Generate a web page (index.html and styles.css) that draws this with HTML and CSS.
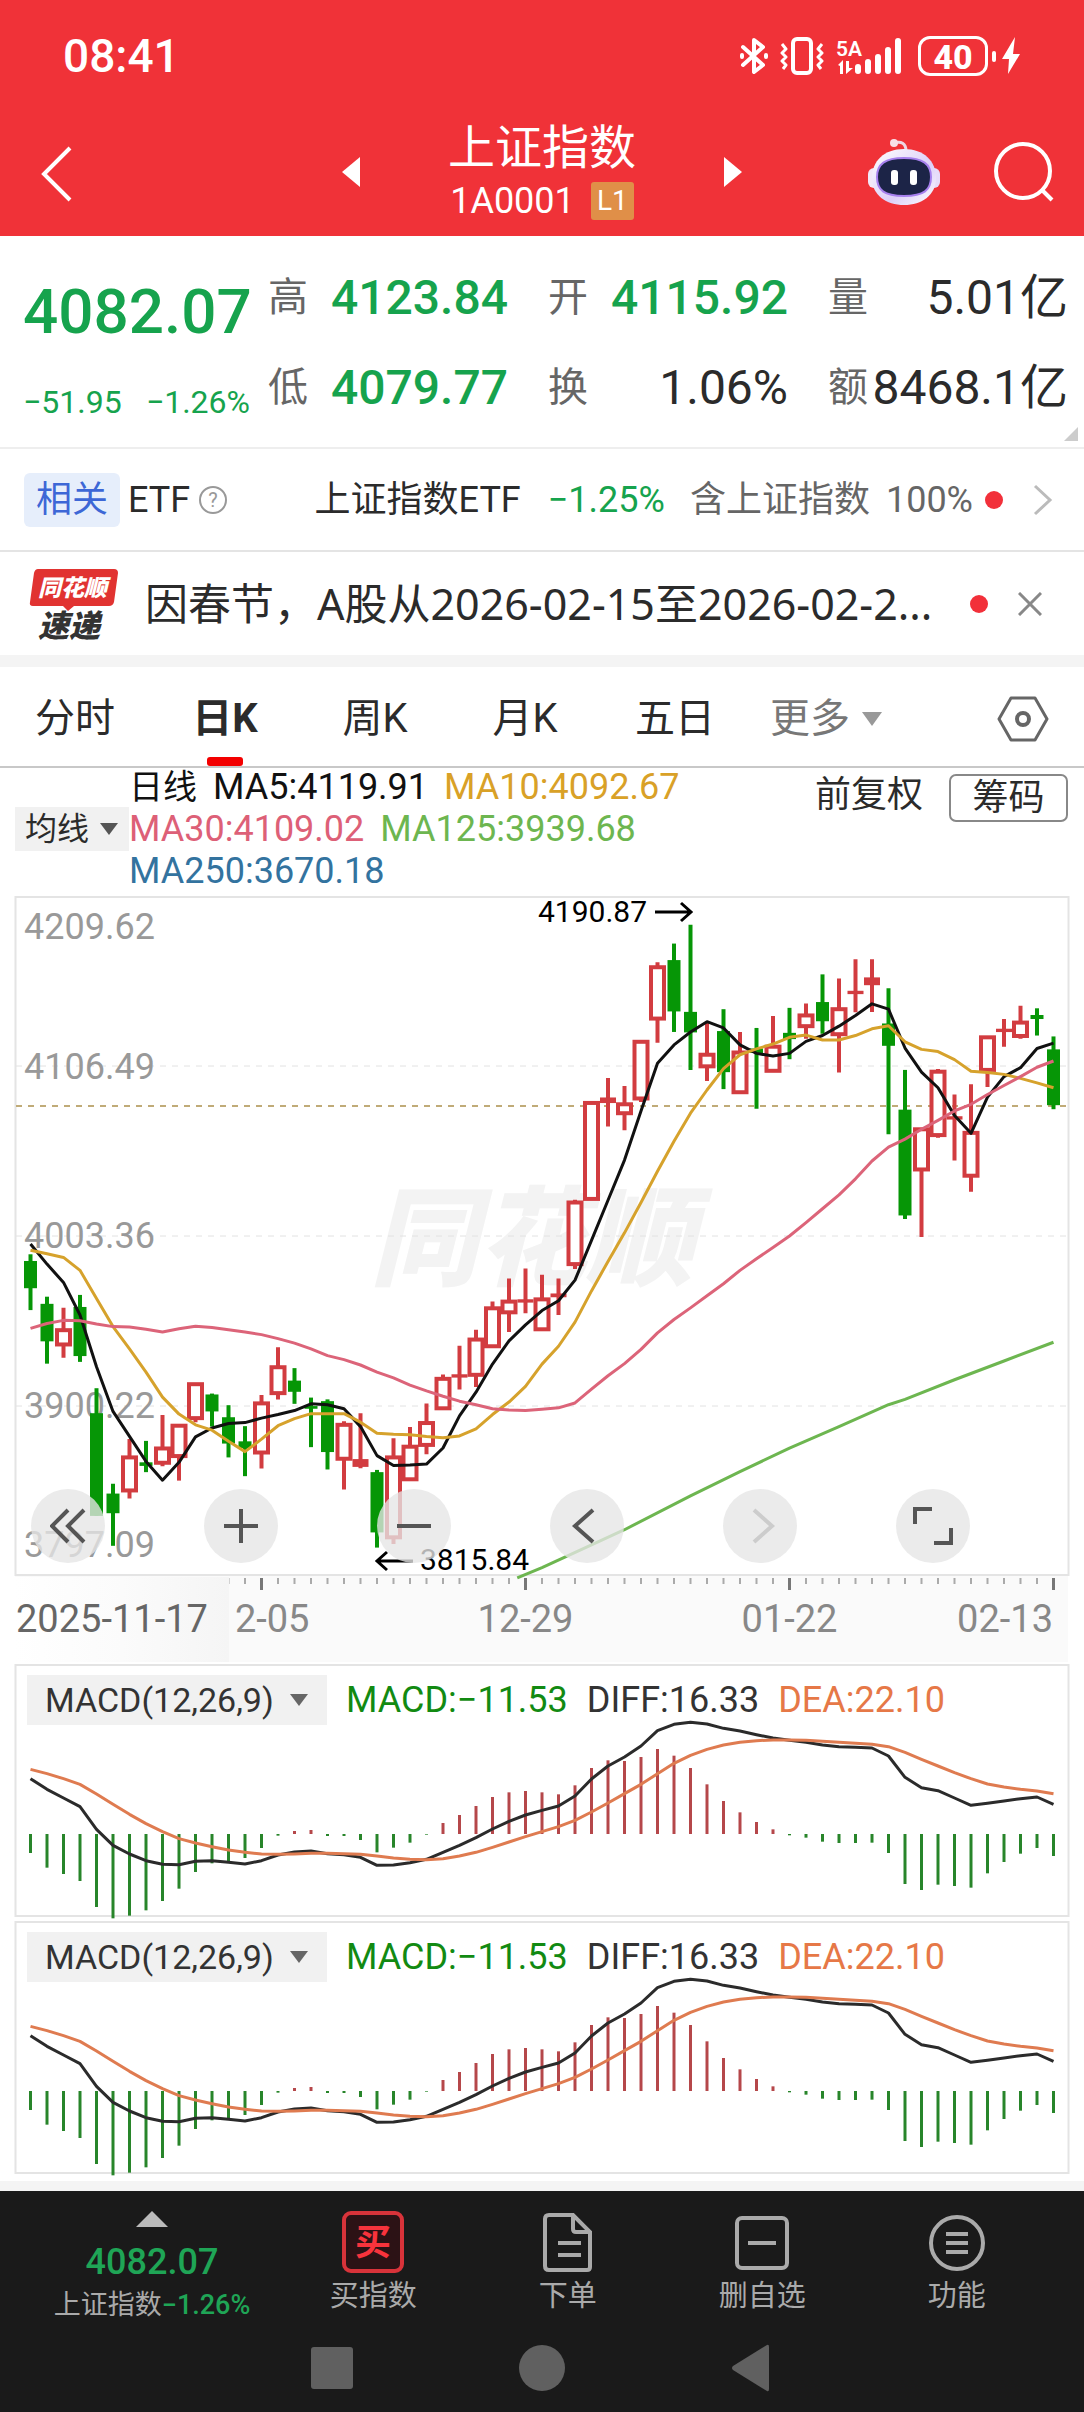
FILE: index.html
```html
<!DOCTYPE html>
<html lang="zh-CN">
<head>
<meta charset="utf-8">
<meta name="viewport" content="width=device-width, initial-scale=1">
<title>上证指数 1A0001</title>
<link rel="stylesheet" href="styles.css">
</head>
<body>
<header class="top">
  <div class="status">
    <span class="clock">08:41</span>
    <div class="status-icons">
      <svg width="28" height="38" viewBox="0 0 28 38" fill="none" stroke="#fff" stroke-width="4" stroke-linejoin="round" stroke-linecap="round"><path d="M3 10l20 18-9 7V3l9 7L3 28"/><path d="M2 18v2M26 18v2" stroke-width="4"/></svg>
      <svg width="44" height="38" viewBox="0 0 44 38" fill="none" stroke="#fff" stroke-width="4" stroke-linejoin="round"><rect x="13" y="2" width="18" height="34" rx="4"/><path d="M2 7l4 5-4 4 4 4-4 4 4 4-3 4M42 7l-4 5 4 4-4 4 4 4-4 4 3 4" stroke-width="3"/></svg>
      <svg class="signal" width="66" height="38" viewBox="0 0 66 38" fill="#fff"><text x="0" y="19" font-size="21">5A</text><path d="M2 28l5-5v14H4v-8zM10 24h3v7h4l-7 6z"/><rect x="19" y="27" width="6" height="10" rx="3"/><rect x="29" y="22" width="6" height="15" rx="3"/><rect x="39" y="17" width="6" height="20" rx="3"/><rect x="49" y="10" width="6" height="27" rx="3"/><rect x="59" y="1" width="6" height="36" rx="3"/></svg>
      <span class="battery">40</span>
      <svg width="28" height="38" viewBox="0 0 28 38" fill="#fff"><rect x="0" y="14" width="4" height="11" rx="2"/><path d="M23 0L10 22h7l-1 15 12-20h-7z"/></svg>
    </div>
  </div>
  <div class="title-row">
    <button class="plain back" aria-label="返回"><svg width="32" height="56" viewBox="0 0 32 56" fill="none" stroke="#fff" stroke-width="4"><path d="M29 2L3 28l26 26"/></svg></button>
    <div class="switcher">
      <button class="plain" aria-label="上一个"><svg width="18" height="30" viewBox="0 0 18 30" fill="#fff"><path d="M18 0v30L0 15z"/></svg></button>
      <div class="title-block">
        <h1 class="title">上证指数</h1>
        <div class="code">1A0001<span class="level">L1</span></div>
      </div>
      <button class="plain" aria-label="下一个"><svg width="18" height="30" viewBox="0 0 18 30" fill="#fff"><path d="M0 0v30l18-15z"/></svg></button>
    </div>
    <div class="title-tools">
      <button class="plain robot" aria-label="智能助手"><svg width="72" height="68" viewBox="0 0 72 68"><defs><linearGradient id="shell" x1="0" y1="0" x2="1" y2="1"><stop offset="0" stop-color="#fff"/><stop offset=".6" stop-color="#dccff8"/><stop offset="1" stop-color="#fff"/></linearGradient></defs><path d="M26 5c7-2 12 0 12 8" fill="none" stroke="#eed6e4" stroke-width="3"/><circle cx="26" cy="5" r="4" fill="#f8dfe8"/><rect x="0" y="30" width="12" height="20" rx="6" fill="#f2e8f8"/><rect x="60" y="30" width="12" height="20" rx="6" fill="#e6dcfa"/><path d="M36 11c20 0 32 12 32 29S54 67 36 67 4 57 4 40s12-29 32-29z" fill="url(#shell)"/><path d="M36 20c19 0 27 6 27 19s-7 19-27 19S9 52 9 39s8-19 27-19z" fill="#1c2447" stroke="#a680ee" stroke-width="2"/><rect x="23" y="32" width="7" height="15" rx="3" fill="#fff"/><rect x="42" y="32" width="7" height="15" rx="3" fill="#fff"/></svg></button>
      <button class="plain" aria-label="搜索"><svg width="60" height="60" viewBox="0 0 60 60" fill="none" stroke="#fff" stroke-width="4"><circle cx="29" cy="29" r="27"/><path d="M48 48l10 10"/></svg></button>
    </div>
  </div>
</header>

<section class="quote">
  <div class="quote-main">
    <div class="price">4082.07</div>
    <div class="change"><span>−51.95</span><span>−1.26%</span></div>
  </div>
  <dl class="stats">
    <div><dt>高</dt><dd class="down">4123.84</dd></div>
    <div><dt>开</dt><dd class="down">4115.92</dd></div>
    <div><dt>量</dt><dd>5.01亿</dd></div>
    <div><dt>低</dt><dd class="down">4079.77</dd></div>
    <div><dt>换</dt><dd>1.06%</dd></div>
    <div><dt>额</dt><dd>8468.1亿</dd></div>
  </dl>
  <svg class="corner" width="14" height="14" viewBox="0 0 14 14" fill="#ccc"><path d="M14 0v14H0z"/></svg>
</section>

<a class="etf" href="#etf">
  <span class="tag">相关</span>
  <span class="etf-label">ETF</span>
  <svg width="28" height="28" viewBox="0 0 28 28"><circle cx="14" cy="14" r="13" fill="none" stroke="#999" stroke-width="2"/><text x="14" y="21" font-size="20" text-anchor="middle" fill="#999">?</text></svg>
  <span class="etf-name">上证指数ETF</span>
  <span class="etf-change">−1.25%</span>
  <span class="etf-weight"><span>含上证指数</span> <span>100%</span></span>
  <span class="dot"></span>
  <svg class="etf-more" width="20" height="32" viewBox="0 0 20 32" fill="none" stroke="#bbb" stroke-width="3"><path d="M2 2l15 14L2 30"/></svg>
</a>

<section class="news">
  <svg class="news-logo" width="90" height="74" viewBox="0 0 90 74"><path d="M9 2h76q4 0 4 4l-4 29q-1 4-5 4H45l-6 5-5-5H4q-4 0-3-4L5 6q1-4 4-4z" fill="#e13331"/><text x="9" y="29" font-size="23" fill="#fff">同花顺</text><text x="9" y="70" font-size="31" fill="#333">速递</text></svg>
  <a class="news-text" href="#news">因春节，A股从2026-02-15至2026-02-2...</a>
  <span class="dot"></span>
  <button class="plain" aria-label="关闭"><svg width="24" height="24" viewBox="0 0 24 24" stroke="#888" stroke-width="3"><path d="M1 1l22 22M23 1L1 23"/></svg></button>
</section>

<nav class="tabs">
  <button class="plain tab">分时</button>
  <button class="plain tab active">日K</button>
  <button class="plain tab">周K</button>
  <button class="plain tab">月K</button>
  <button class="plain tab">五日</button>
  <label class="more"><select aria-label="更多周期"><option>更多</option></select><svg width="20" height="14" viewBox="0 0 20 14" fill="#999"><path d="M0 0h20L10 14z"/></svg></label>
  <button class="plain settings" aria-label="图表设置"><svg width="52" height="46" viewBox="0 0 52 46" fill="none" stroke="#666" stroke-width="3"><path d="M14 2h24l12 21-12 21H14L2 23z" stroke-linejoin="round"/><circle cx="26" cy="23" r="6" stroke-width="4"/></svg></button>
</nav>

<section class="legend">
  <label class="ma-pick"><select aria-label="均线"><option>均线</option></select><svg width="18" height="12" viewBox="0 0 18 12" fill="#555"><path d="M0 0h18L9 12z"/></svg></label>
  <div class="ma-list">
    <span class="ma-title">日线</span>
    <span>MA5:4119.91</span>
    <span class="ma10">MA10:4092.67</span>
    <span class="ma30">MA30:4109.02</span>
    <span class="ma125">MA125:3939.68</span>
    <span class="ma250">MA250:3670.18</span>
  </div>
  <div class="legend-tools">
    <button class="plain adjust">前复权</button>
    <button class="chips">筹码</button>
  </div>
</section>

<section class="chart">
  <svg id="kline" class="plot" viewBox="0 0 1084 772" role="img" aria-label="日K线图"></svg>
  <div class="chart-tools">
    <button class="round" aria-label="最早"><svg width="36" height="36" viewBox="0 0 36 36"><path d="M18 2L2 18l16 16M34 2L18 18l16 16"/></svg></button>
    <button class="round" aria-label="放大"><svg width="36" height="36" viewBox="0 0 36 36"><path d="M18 1v34M1 18h34"/></svg></button>
    <button class="round" aria-label="缩小"><svg width="36" height="36" viewBox="0 0 36 36"><path d="M1 18h34"/></svg></button>
    <button class="round" aria-label="向左"><svg width="36" height="36" viewBox="0 0 36 36"><path d="M24 2L6 18l18 16"/></svg></button>
    <button class="round faint" aria-label="向右"><svg width="36" height="36" viewBox="0 0 36 36"><path d="M12 2l18 16-18 16"/></svg></button>
    <button class="round" aria-label="全屏"><svg width="40" height="40" viewBox="0 0 40 40"><path d="M2 18V3h17M38 22v15H21"/></svg></button>
  </div>
</section>

<section class="macd">
  <div class="macd-head">
    <label class="macd-pick"><select aria-label="指标"><option>MACD(12,26,9)</option></select><svg width="18" height="12" viewBox="0 0 18 12" fill="#666"><path d="M0 0h18L9 12z"/></svg></label>
    <span class="macd-value">MACD:−11.53</span><span>DIFF:16.33</span><span class="dea">DEA:22.10</span>
  </div>
  <svg class="plot macd-plot" viewBox="0 0 1084 184" role="img" aria-label="MACD"></svg>
</section>
<section class="macd">
  <div class="macd-head">
    <label class="macd-pick"><select aria-label="指标"><option>MACD(12,26,9)</option></select><svg width="18" height="12" viewBox="0 0 18 12" fill="#666"><path d="M0 0h18L9 12z"/></svg></label>
    <span class="macd-value">MACD:−11.53</span><span>DIFF:16.33</span><span class="dea">DEA:22.10</span>
  </div>
  <svg class="plot macd-plot" viewBox="0 0 1084 184" role="img" aria-label="MACD"></svg>
</section>

<footer class="bottom">
  <nav class="actions">
    <a class="ticker" href="#index">
      <svg width="32" height="16" viewBox="0 0 32 16" fill="#bbb"><path d="M16 0l16 16H0z"/></svg>
      <span class="ticker-price">4082.07</span>
      <span class="ticker-name">上证指数<b>−1.26%</b></span>
    </a>
    <a class="action" href="#buy"><svg width="62" height="62" viewBox="0 0 62 62"><rect x="2" y="2" width="58" height="58" rx="7" fill="#2c1215" stroke="#d8333a" stroke-width="4"/><text x="31" y="44" font-size="36" font-weight="700" text-anchor="middle" fill="#f8333c">买</text></svg>买指数</a>
    <a class="action" href="#order"><svg width="62" height="62" viewBox="0 0 62 62" fill="none" stroke="#aaa" stroke-width="4"><path d="M12 4h24l17 17v35q0 3-3 3H12q-4 0-4-4V8q0-4 4-4zM36 4v14q0 3 3 3h14M21 32h23M21 44h23"/></svg>下单</a>
    <a class="action" href="#remove"><svg width="62" height="62" viewBox="0 0 62 62" fill="none" stroke="#aaa" stroke-width="4"><rect x="6" y="7" width="50" height="50" rx="5"/><path d="M17 32h28"/></svg>删自选</a>
    <a class="action" href="#tools"><svg width="62" height="62" viewBox="0 0 62 62" fill="none" stroke="#aaa" stroke-width="4"><circle cx="31" cy="32" r="26"/><path d="M20 23h22M20 32h22M20 41h22"/></svg>功能</a>
  </nav>
  <div class="system">
    <button class="plain" aria-label="最近任务"><svg width="48" height="48" viewBox="0 0 48 48" fill="#606060"><rect x="3" y="3" width="42" height="42" rx="3"/></svg></button>
    <button class="plain" aria-label="主页"><svg width="48" height="48" viewBox="0 0 48 48" fill="#606060"><circle cx="24" cy="24" r="23"/></svg></button>
    <button class="plain" aria-label="返回上级"><svg width="48" height="48" viewBox="0 0 48 48" fill="#606060"><path d="M39 1q2-1 2 2v42q0 3-2 2L5 26q-2-2 0-4z"/></svg></button>
  </div>
</footer>
<script src="chart.js"></script>
</body>
</html>
```
FILE: styles.css
```css
* { box-sizing: border-box; }
body {
  margin: 0;
  background: #fff;
  color: #2b2b2b;
  font-family: Roboto, "Noto Sans CJK SC", sans-serif;
  font-size: 36px;
  line-height: 42px;
}
a { color: inherit; text-decoration: none; }
svg { display: block; flex: none; }
svg text { font-family: Roboto, "Noto Sans CJK SC", sans-serif; }
.plain {
  border: 0;
  padding: 0;
  background: none;
  color: inherit;
  font: inherit;
}
select {
  appearance: none;
  border: 0;
  margin: 0;
  padding: 0;
  background: none;
  color: inherit;
  font: inherit;
}

/* header */
.top { background: #f03238; color: #fff; }
.status {
  display: flex;
  justify-content: space-between;
  align-items: center;
  height: 108px;
  padding: 4px 64px 0 63px;
}
.clock { font-size: 46px; font-weight: 500; }
.status-icons { display: flex; align-items: center; gap: 12px; }
.signal { overflow: visible; }
.signal text { font-weight: 600; }
.battery {
  width: 70px;
  height: 40px;
  margin-left: 4px;
  margin-right: -8px;
  border: 3px solid #fff;
  border-radius: 12px;
  font-size: 34px;
  font-weight: 800;
  line-height: 36px;
  text-align: center;
}
.title-row {
  display: grid;
  grid-template-columns: 1fr auto 1fr;
  align-items: center;
  height: 128px;
  padding: 0 30px;
}
.back { justify-self: start; margin-left: 11px; padding-top: 4px; }
.switcher { display: flex; align-items: center; gap: 88px; }
.title-block { display: grid; justify-items: center; gap: 2px; }
.title { margin: 0; font-size: 47px; line-height: 56px; font-weight: 400; }
.code { display: flex; align-items: center; gap: 16px; line-height: 46px; }
.level {
  width: 43px;
  background: #e08f48;
  border-radius: 3px;
  font-size: 28px;
  line-height: 38px;
  text-align: center;
}
.title-tools { display: flex; align-items: center; justify-content: flex-end; gap: 54px; }

/* quote */
.quote {
  position: relative;
  display: flex;
  gap: 18px;
  padding: 17px 16px 0 23px;
  border-bottom: 2px solid #eee;
}
.quote-main { flex: none; width: 227px; padding-top: 14px; color: #16a34d; }
.price { font-size: 62px; font-weight: 500; line-height: 90px; }
.change { display: flex; justify-content: space-between; font-size: 32px; line-height: 90px; }
.stats {
  flex: 1;
  display: grid;
  grid-template-columns: repeat(3, 1fr);
  column-gap: 40px;
  margin: 0 0 14px;
}
.stats div { display: flex; justify-content: space-between; line-height: 90px; white-space: nowrap; }
.stats dt { font-size: 40px; color: #666; }
.stats dd { margin: 0; font-size: 48px; }
.stats .down { color: #16a34d; font-weight: 500; }
.corner { position: absolute; right: 6px; bottom: 6px; }

/* related fund */
.etf {
  display: flex;
  align-items: center;
  height: 103px;
  padding: 0 31px 0 24px;
  border-bottom: 2px solid #e4e4e4;
  white-space: nowrap;
}
.tag {
  padding: 0 12px;
  margin-right: 8px;
  background: #e6eefb;
  border-radius: 6px;
  color: #3d67d6;
  line-height: 54px;
}
.etf-label { margin-right: 9px; }
.etf-name { margin-left: auto; }
.etf-change { margin: 0 25px 0 27px; color: #16a34d; }
.etf-weight { display: flex; gap: 16px; color: #666; }
.dot { flex: none; width: 18px; height: 18px; margin-left: 12px; border-radius: 50%; background: #f2303a; }
.etf-more { margin-left: 30px; }

/* news strip */
.news {
  display: flex;
  align-items: center;
  height: 115px;
  padding: 0 42px 0 29px;
  border-bottom: 12px solid #f4f4f4;
}
.news-logo text { font-weight: 900; font-style: italic; }
.news-text {
  flex: 1;
  margin-left: 26px;
  font-family: "Noto Sans", "Noto Sans CJK SC", sans-serif;
  font-size: 43px;
  white-space: nowrap;
}
.news .plain { margin-left: 30px; }

/* period tabs */
.tabs {
  display: grid;
  grid-template-columns: repeat(5, 150fr) 212fr 122fr;
  height: 101px;
  border-bottom: 2px solid #c8c8c8;
  font-size: 40px;
}
.tab { position: relative; padding-top: 4px; }
.active { font-weight: 700; }
.active::after {
  content: "";
  position: absolute;
  left: calc(50% - 18px);
  bottom: 0;
  width: 36px;
  height: 9px;
  border-radius: 3px;
  background: #f30000;
}
.more { display: flex; align-items: center; gap: 12px; padding: 4px 0 0 20px; color: #777; }
.settings { justify-self: center; padding-top: 4px; }

/* moving average legend */
.legend {
  display: flex;
  align-items: center;
  height: 122px;
  padding: 0 16px 0 15px;
}
.ma-pick {
  display: flex;
  align-items: center;
  gap: 10px;
  width: 114px;
  height: 44px;
  padding-left: 10px;
  background: #f1f1f1;
  font-size: 32px;
}
.ma-list {
  flex: 1;
  display: flex;
  flex-wrap: wrap;
  column-gap: 16px;
  max-width: 600px;
  color: #111;
}
.ma-title { font-size: 34px; }
.ma10 { color: #d9a127; }
.ma30 { color: #dd6077; }
.ma125 { color: #6db650; }
.ma250 { color: #33739f; }
.legend-tools { display: flex; align-self: flex-start; align-items: flex-start; gap: 26px; margin: 6px 0 0 auto; }
.chips {
  width: 119px;
  height: 48px;
  padding: 0;
  border: 2px solid #888;
  border-radius: 7px;
  background: #fff;
  color: inherit;
  font: inherit;
  line-height: 42px;
}

/* charts */
.chart { position: relative; }
.plot { width: 100%; height: auto; overflow: visible; }
.chart-tools {
  position: absolute;
  left: 0;
  right: 0;
  top: 599px;
  display: flex;
  justify-content: space-between;
  padding: 0 114px 0 31px;
}
.round {
  display: grid;
  place-items: center;
  width: 74px;
  height: 74px;
  padding: 0;
  border: 0;
  border-radius: 50%;
  background: rgba(230, 230, 230, 0.78);
}
.round svg { fill: none; stroke: #555; stroke-width: 4; }
.faint svg { stroke: #ccc; }
.macd { padding-top: 13px; }
.macd-head {
  display: flex;
  align-items: center;
  gap: 19px;
  padding-left: 27px;
  height: 50px;
  color: #333;
  white-space: nowrap;
}
.macd-pick {
  display: flex;
  align-items: center;
  gap: 16px;
  width: 300px;
  height: 50px;
  padding-left: 18px;
  background: #f1f1f1;
  font-size: 34px;
}
.macd-value { color: #128a12; }
.dea { color: #e67847; }
.macd-plot { margin-top: 10px; }

/* bottom bar */
.bottom { margin-top: 5px; border-top: 10px solid #f4f4f4; background: #1a1a1a; color: #aaa; }
.actions {
  display: grid;
  grid-template-columns: 248px repeat(4, 1fr);
  padding: 20px 30px 0 28px;
  font-size: 29px;
}
.action { display: flex; flex-direction: column; align-items: center; gap: 2px; }
.ticker { display: flex; flex-direction: column; align-items: center; }
.ticker-price { margin-top: 14px; font-weight: 500; color: #1fa556; font-size: 36px; }
.ticker-name { font-size: 27px; line-height: 44px; white-space: nowrap; }
.ticker-name b { font-weight: 500; color: #1fa556; }
.system {
  display: flex;
  justify-content: center;
  gap: 162px;
  padding: 17px 0 22px;
}
```
FILE: chart.js
```js
// Daily series, one entry per trading day. Levels count downward from the top of the plot.
const STEP = 16.5;
const FIRST = 30.5;
const RED = '#d23c40';
const GREEN = '#069606';
const x = i => FIRST + STEP * i;
const level = v => v / 2.24;

// [rising, high, low, body top, body bottom]
const candles = [
  [0,816,941,831,892],[0,911,1061,927,1011],[1,936,1048,986,1018],[0,907,1057,934,1044],
  [0,1116,1402,1172,1402],[0,1330,1469,1352,1396],[1,1230,1363,1271,1345],[0,1234,1304,1282,1290],
  [1,1176,1291,1251,1283],[1,1200,1323,1200,1268],[1,1105,1192,1107,1183],[0,1128,1202,1130,1168],
  [0,1154,1271,1181,1240],[0,1201,1313,1235,1250],[1,1131,1296,1150,1260],[1,1024,1141,1069,1127],
  [0,1071,1151,1099,1124],[0,1137,1248,1156,1162],[0,1141,1298,1145,1259],[1,1190,1343,1198,1274],
  [1,1172,1295,1277,1290],[0,1299,1473,1304,1439],[1,1228,1465,1271,1450],[1,1203,1322,1247,1320],
  [1,1150,1264,1194,1243],[1,1085,1162,1095,1161],[1,1021,1119,1087,1090],[1,985,1113,1007,1086],
  [1,922,1026,937,1022],[1,870,990,922,946],[1,848,948,919,922],[1,862,985,917,984],
  [1,870,952,906,910],[1,694,849,700,838],[1,475,693,477,692],[1,421,530,467,475],
  [1,439,538,480,500],[1,337,475,340,467],[1,162,342,173,288],[0,120,318,157,272],
  [0,78,403,273,319],[1,295,428,369,395],[0,267,446,316,408],[1,318,454,364,453],
  [0,309,490,355,365],[1,282,406,351,405],[0,264,379,320,334],[1,254,333,281,305],
  [0,189,322,251,294],[1,198,409,267,323],[1,155,274,228,231],[1,155,273,198,211],
  [0,220,547,299,349],[0,403,737,492,729],[1,534,777,536,626],[1,401,555,407,549],
  [1,458,606,509,512],[1,435,676,544,640],[1,328,441,330,403],[1,289,351,313,316],
  [1,259,333,297,327],[0,265,326,280,289],[0,328,491,357,482]
];
const ma5 = [793,838,879,952,1068,1168,1224,1280,1322,1282,1225,1205,1195,1193,1183,1175,1166,1151,1153,1162,1202,1267,1289,1288,1286,1250,1178,1125,1062,1010,974,942,920,874,785,695,605,495,388,347,318,295,309,347,366,372,366,339,326,305,281,255,267,354,408,443,505,545,464,418,398,355,343];
const ma10 = [807,815,823,852,915,978,1028,1080,1136,1174,1198,1210,1235,1258,1230,1200,1184,1173,1173,1173,1192,1217,1219,1220,1224,1227,1223,1207,1175,1147,1112,1062,1022,968,898,832,768,700,630,563,500,448,400,369,356,345,330,325,336,336,326,311,304,340,357,362,380,406,409,413,422,432,443];
const ma30 = [982,971,964,965,972,978,979,984,990,983,977,980,985,990,996,1005,1015,1028,1043,1052,1064,1080,1093,1109,1122,1134,1145,1153,1162,1165,1166,1163,1160,1149,1118,1088,1061,1029,992,962,936,909,882,852,826,801,775,745,714,683,647,607,576,558,536,516,495,480,458,438,418,397,383];
const ma125 = [[29.5,1541],[31,1518],[34,1467],[36,1433],[40,1357],[43,1303],[46,1250],[49,1202],[52,1153],[53,1141],[56,1097],[59,1055],[62,1013]];

const line = (points, color, width = 3) =>
  `<polyline fill="none" stroke="${color}" stroke-width="${width}" stroke-linejoin="round" points="${points.map(p => p.join(',')).join(' ')}"/>`;
const average = (values, color) => line(values.map((v, i) => [x(i), level(v)]), color);

function candle([rising, high, low, top, bottom], i) {
  const cx = x(i), t = level(top), b = level(bottom);
  if (!rising) {
    return `<path d="M${cx} ${level(high)}V${level(low)}" stroke="${GREEN}" stroke-width="4"/>` +
      `<rect x="${cx - 6.5}" y="${t}" width="13" height="${b - t}" fill="${GREEN}"/>`;
  }
  const wicks = `<path d="M${cx} ${level(high)}V${t}M${cx} ${b}V${level(low)}" stroke="${RED}" stroke-width="4"/>`;
  if (b - t < 7) {
    return wicks + `<rect x="${cx - 8}" y="${t - 1}" width="16" height="${b - t + 2}" fill="${RED}"/>`;
  }
  return wicks + `<rect x="${cx - 6.5}" y="${t}" width="13" height="${b - t}" fill="#fff" stroke="${RED}" stroke-width="4"/>`;
}

function drawKline() {
  let out = '<defs><linearGradient id="shade"><stop offset="0" stop-color="#fff"/><stop offset=".5" stop-color="#fbfbfb"/><stop offset="1" stop-color="#f5f5f5"/></linearGradient></defs>';
  out += '<rect x="15" y="686" width="1053" height="86" fill="#fafafa"/>';
  out += '<text x="370" y="387" font-size="108" font-weight="900" font-style="italic" fill="#f3f3f3">同花顺</text>';
  out += '<rect x="15.5" y="7" width="1053" height="678" fill="none" stroke="#e4e4e4" stroke-width="2"/>';
  for (const y of [176, 346, 516]) {
    out += `<path d="M16 ${y}H1068" stroke="#e2e2e2" stroke-dasharray="6 6"/>`;
  }
  [['4209.62', 49], ['4106.49', 189], ['4003.36', 358], ['3900.22', 528], ['3797.09', 667]].forEach(([label, y]) => {
    out += `<text x="24" y="${y}" font-size="36" fill="#999">${label}</text>`;
  });
  out += '<path d="M16 216H1068" stroke="#c0ab78" stroke-width="2" stroke-dasharray="6 6"/>';
  out += candles.map(candle).join('');
  out += average(ma5, '#111') + average(ma10, '#d6a22c') + average(ma30, '#dc6479');
  out += line(ma125.map(([i, v]) => [x(i), level(v)]), '#6db650');
  out += '<text x="538" y="32" font-size="30" fill="#000">4190.87</text><path d="M655 22H690M681 13l10 9-10 9" fill="none" stroke="#000" stroke-width="3"/>';
  out += '<text x="420" y="680" font-size="30" fill="#000">3815.84</text><path d="M413 671H378M387 662l-10 9 10 9" fill="none" stroke="#000" stroke-width="3"/>';
  for (let i = 0; i < candles.length; i++) {
    const major = i % 16 === 14;
    out += `<path d="M${x(i)} 688v${major ? 12 : 6}" stroke="${major ? '#777' : '#aaa'}" stroke-width="${major ? 3 : 2}"/>`;
  }
  const date = (label, px, anchor, color = '#888') => `<text x="${px}" y="742" font-size="38" text-anchor="${anchor}" fill="${color}">${label}</text>`;
  out += date('12-05', x(14), 'middle') + date('12-29', x(30), 'middle') + date('01-22', x(46), 'middle') + date('02-13', 1053, 'end');
  out += '<rect x="15" y="687" width="214" height="85" fill="url(#shade)"/>' + date('2025-11-17', 16, 'start', '#666');
  document.getElementById('kline').innerHTML = out;
}

// MACD histogram ends and signal lines; ZERO is the baseline level.
const ZERO = 522;
const bars = [579,623,642,663,741,775,767,751,723,686,636,610,604,594,564,527,513,510,528,528,540,577,563,548,524,489,465,438,411,397,393,397,403,376,324,301,303,291,267,287,324,373,423,457,486,508,526,533,545,549,549,548,579,672,690,674,678,683,640,606,581,564,588];
const diff = [356,388,414,440,508,556,582,602,613,614,604,602,607,612,602,585,576,573,581,584,592,616,615,608,598,577,556,533,507,484,465,451,438,408,357,318,291,258,212,193,187,192,205,213,224,234,241,247,255,260,262,264,288,352,383,392,414,436,430,423,416,411,433];
const dea = [328,341,356,373,402,433,463,491,515,536,549,560,570,577,582,583,582,580,580,581,583,588,594,598,599,596,588,577,562,546,530,515,500,481,456,429,401,373,341,310,286,268,255,247,242,240,240,241,244,247,250,253,260,277,298,318,338,356,372,381,388,393,401];

function drawMacd(svg) {
  const y = v => v / 3 - 75;
  let out = '<rect x="15.5" y="-70" width="1053" height="251" fill="none" stroke="#e4e4e4" stroke-width="2"/>';
  out += bars.map((v, i) => `<path d="M${x(i)} ${y(ZERO)}V${y(v)}" stroke="${v < ZERO ? '#b5474a' : '#28852a'}" stroke-width="3"/>`).join('');
  out += line(diff.map((v, i) => [x(i), y(v)]), '#2b2b2b') + line(dea.map((v, i) => [x(i), y(v)]), '#df7b50');
  svg.innerHTML = out;
}

drawKline();
document.querySelectorAll('.macd-plot').forEach(drawMacd);
```
